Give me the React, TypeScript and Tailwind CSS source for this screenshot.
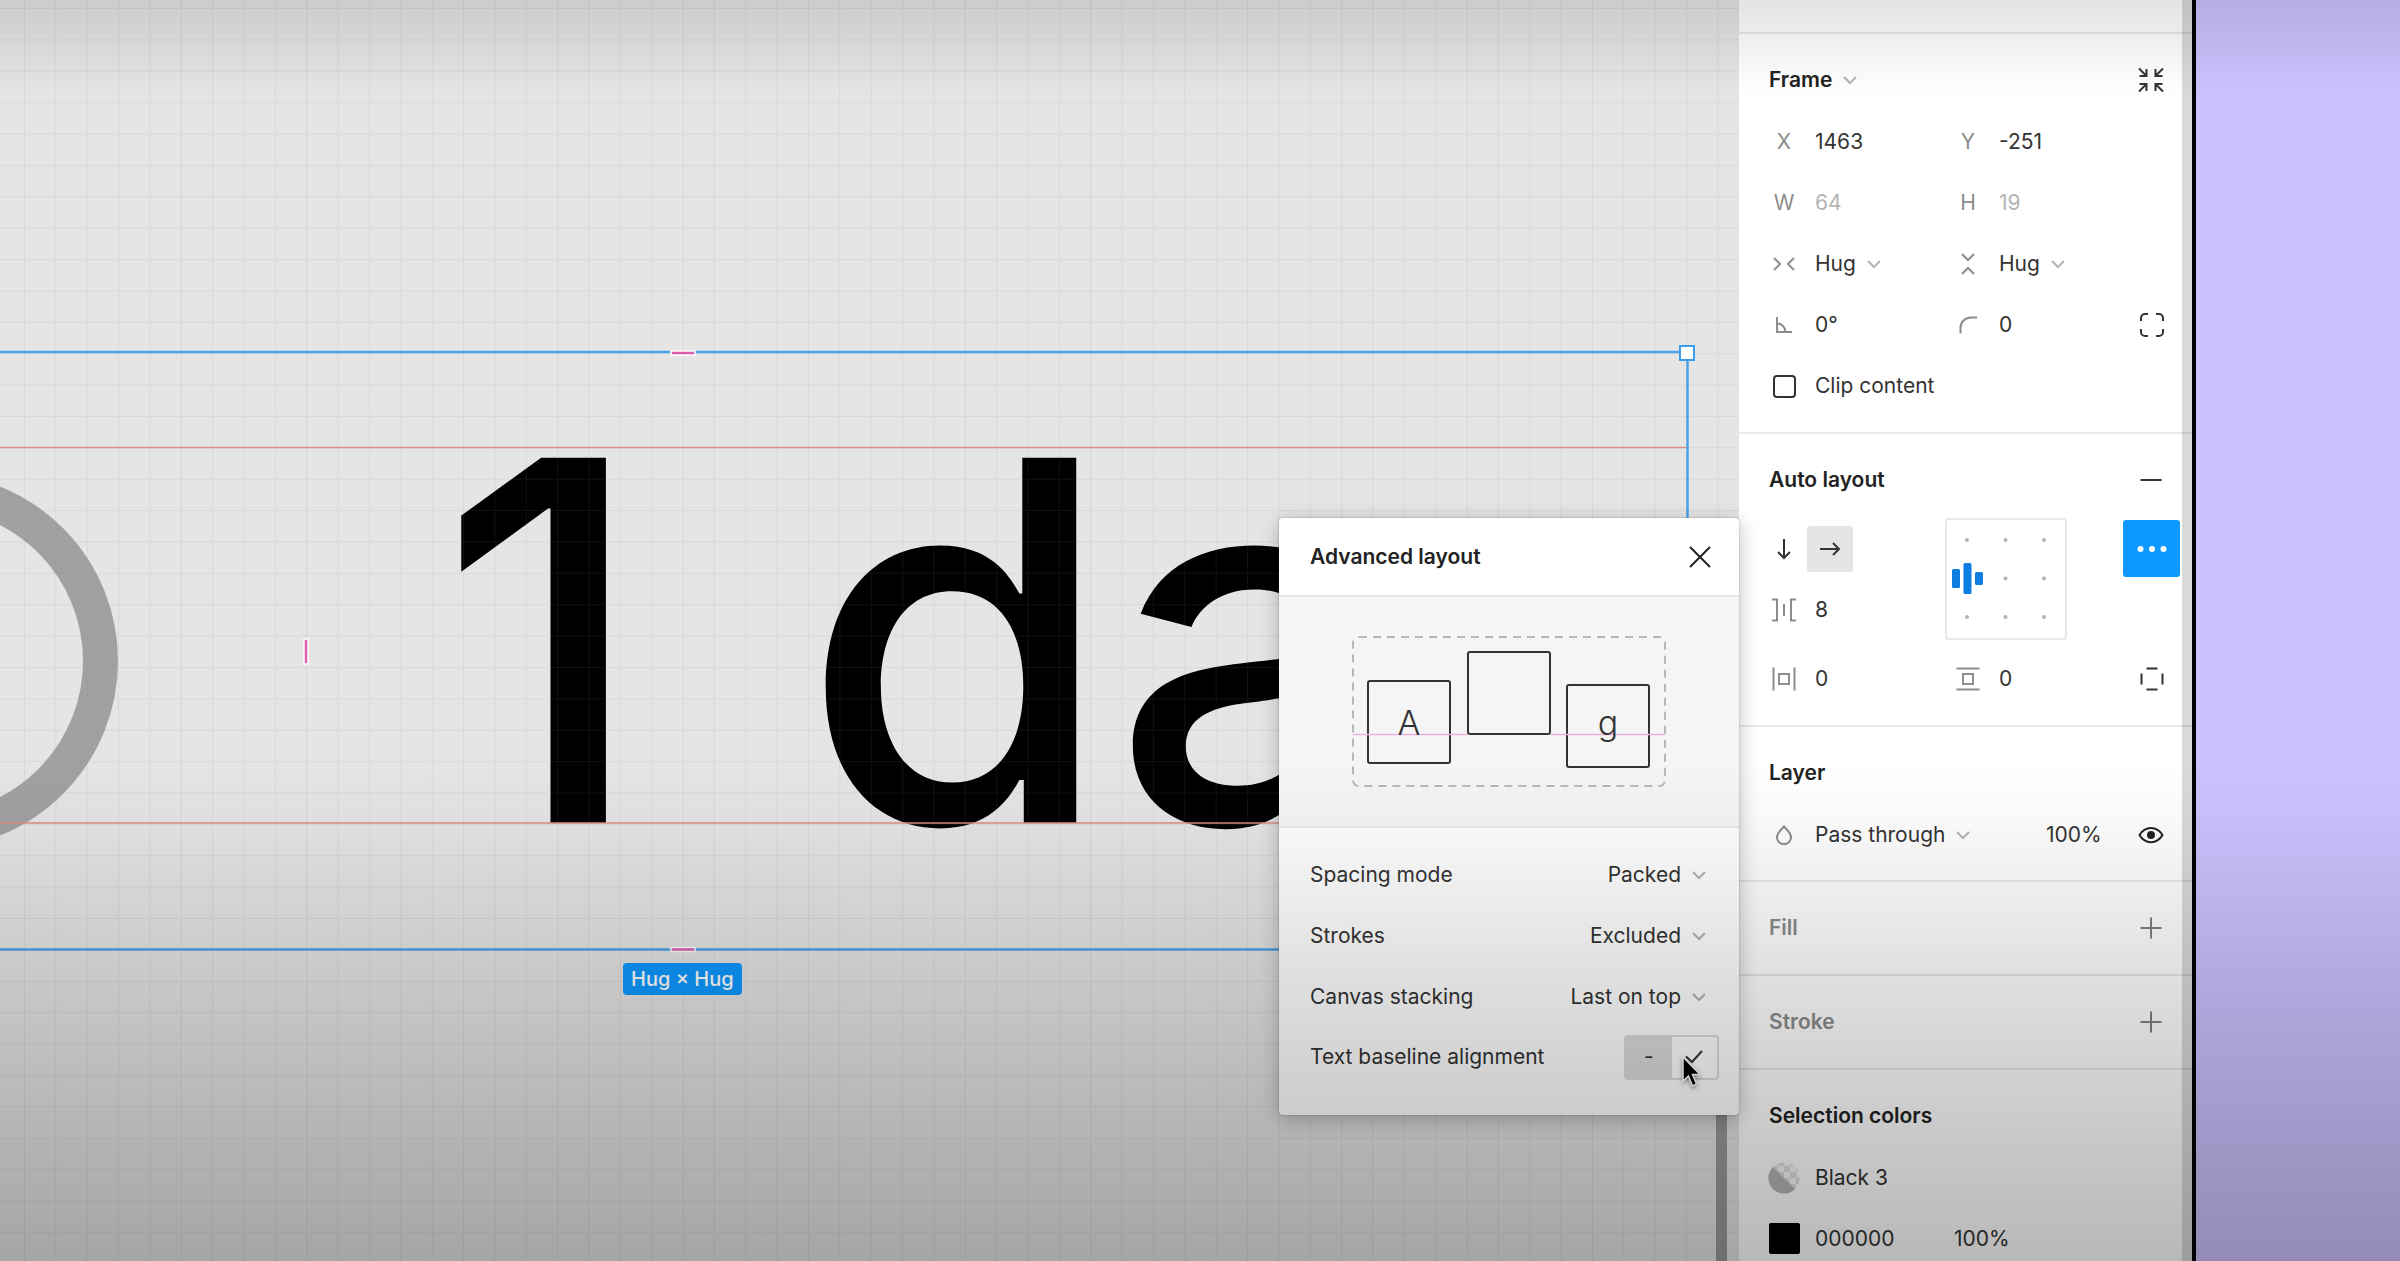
import React from 'react';

interface IconProps {
  children: React.ReactNode;
  className?: string;
}

// Every panel icon sits centred in the same 46px slot
const Icon: React.FC<IconProps> = ({ children, className = 'text-[#8c8c8c]' }) => (
  <svg
    width={46}
    height={46}
    viewBox="-23 -23 46 46"
    fill="none"
    stroke="currentColor"
    strokeWidth={2}
    className={`shrink-0 ${className}`}
    aria-hidden="true"
  >
    {children}
  </svg>
);

const Chevron = () => (
  <svg
    width={14}
    height={10}
    viewBox="-7 -5 14 10"
    fill="none"
    stroke="currentColor"
    strokeWidth={2}
    className="pointer-events-none shrink-0 text-[#b3b3b3]"
    aria-hidden="true"
  >
    <path d="M-6 -3 L0 3 L6 -3" />
  </svg>
);

interface DropdownProps {
  label?: string;
  id?: string;
  options: string[];
}

const Dropdown: React.FC<DropdownProps> = ({ label, id, options }) => (
  <div className="flex items-center gap-[11px]">
    <select id={id} aria-label={label} className="appearance-none bg-transparent outline-none field-sizing-content">
      {options.map((option) => (
        <option key={option}>{option}</option>
      ))}
    </select>
    <Chevron />
  </div>
);

interface FieldProps {
  label: string;
  value: string;
  icon: React.ReactNode;
  muted?: boolean;
}

const Field: React.FC<FieldProps> = ({ label, value, icon, muted }) => (
  <label className="flex h-[61px] w-[184px] shrink-0 items-center gap-2">
    <span className="flex w-[46px] shrink-0 justify-center text-[#8c8c8c]">{icon}</span>
    <input
      type="text"
      aria-label={label}
      defaultValue={value}
      className={`w-24 bg-transparent outline-none ${muted ? 'text-[#b3b3b3]' : ''}`}
    />
  </label>
);

interface SectionProps {
  title: React.ReactNode;
  action?: React.ReactNode;
  children?: React.ReactNode;
  muted?: boolean;
  last?: boolean;
}

const Section: React.FC<SectionProps> = ({ title, action, children, muted, last }) => (
  <section className={`py-[15px] pl-[22px] pr-[18px] ${last ? '' : 'border-b-2 border-[#e8e8e8]'}`}>
    <div className="flex h-[62px] items-center justify-between pl-2">
      <h2 className={`flex items-center gap-[11px] font-semibold ${muted ? 'text-[#8c8c8c]' : 'text-[#222]'}`}>
        {title}
      </h2>
      {action}
    </div>
    {children}
  </section>
);

const AddButton: React.FC<{ label: string }> = ({ label }) => (
  <button type="button" aria-label={label}>
    <Icon className="text-[#808080]">
      <path d="M-10.5 0 H10.5 M0 -10.5 V10.5" />
    </Icon>
  </button>
);

const AlignmentGrid = () => (
  <svg width={122} height={122} viewBox="0 0 118 118" className="rounded-[3px] border-2 border-[#e8e8e8]">
    <g fill="#b3b3b3">
      {[20, 58.5, 97].map((y) =>
        [20, 58.5, 97].map((x) => (x === 20 && y === 58.5 ? null : <circle key={`${x}-${y}`} cx={x} cy={y} r={2} />))
      )}
    </g>
    <g fill="#0d7de2">
      <rect x={5} y={49} width={8} height={19} rx={1.5} />
      <rect x={16.5} y={43} width={8} height={31} rx={1.5} />
      <rect x={28} y={52} width={8} height={13} rx={1.5} />
    </g>
  </svg>
);

const DesignPanel = () => (
  <aside className="relative w-[457px] shrink-0 overflow-hidden border-r-4 border-black bg-white">
    <div className="h-[34px] border-b-2 border-[#e8e8e8]" />

    <Section
      title={
        <>
          Frame <Chevron />
        </>
      }
      action={
        <button type="button" aria-label="Resize to fit">
          <Icon className="text-[#333]">
            <path d="M-12 -11.5 L-4.5 -4 M-4.5 -11 V-4 H-11.5 M12 -11.5 L4.5 -4 M4.5 -11 V-4 H11.5 M-12 11.5 L-4.5 4 M-4.5 11 V4 H-11.5 M12 11.5 L4.5 4 M4.5 11 V4 H11.5" />
          </Icon>
        </button>
      }
    >
      <div className="flex">
        <Field label="X" value="1463" icon="X" />
        <Field label="Y" value="-251" icon="Y" />
      </div>
      <div className="flex">
        <Field label="Width" value="64" icon="W" muted />
        <Field label="Height" value="19" icon="H" muted />
      </div>
      <div className="flex">
        <div className="flex h-[61px] w-[184px] items-center gap-2">
          <Icon>
            <path d="M-10 -6 L-4 0 L-10 6 M10 -6 L4 0 L10 6" />
          </Icon>
          <Dropdown label="Horizontal resizing" options={['Hug', 'Fixed']} />
        </div>
        <div className="flex h-[61px] w-[184px] items-center gap-2">
          <Icon>
            <path d="M-6 -10 L0 -4 L6 -10 M-6 10 L0 4 L6 10" />
          </Icon>
          <Dropdown label="Vertical resizing" options={['Hug', 'Fixed']} />
        </div>
      </div>
      <div className="flex items-center">
        <Field
          label="Rotation"
          value="0°"
          icon={
            <Icon>
              <path d="M-7 -8 V7 H8 M-7 -1.5 A8.5 8.5 0 0 1 1.5 7" />
            </Icon>
          }
        />
        <Field
          label="Corner radius"
          value="0"
          icon={
            <Icon>
              <path d="M-7.5 8.5 V3 A10.5 10.5 0 0 1 3 -7.5 H9" />
            </Icon>
          }
        />
        <button type="button" aria-label="Independent corners">
          <Icon className="text-[#333]">
            <path d="M-11 -4 V-7 A4 4 0 0 1 -7 -11 H-4 M4 -11 H7 A4 4 0 0 1 11 -7 V-4 M11 4 V7 A4 4 0 0 1 7 11 H4 M-4 11 H-7 A4 4 0 0 1 -11 7 V4" />
          </Icon>
        </button>
      </div>
      <label className="flex h-[62px] items-center gap-2">
        <span className="flex w-[46px] justify-center">
          <input type="checkbox" className="size-[23px] appearance-none rounded-[4px] border-2 border-[#333]" />
        </span>
        Clip content
      </label>
    </Section>

    <Section
      title="Auto layout"
      action={
        <button type="button" aria-label="Remove auto layout">
          <Icon className="text-[#333]">
            <path d="M-10.5 0 H10.5" />
          </Icon>
        </button>
      }
    >
      <div className="mt-[7px] flex">
        <div className="w-[184px]">
          <div className="flex h-[61px] items-center">
            <button type="button" aria-label="Vertical layout">
              <Icon className="text-[#333]">
                <path d="M0 -10 V9 M-6 3 L0 9 L6 3" />
              </Icon>
            </button>
            <button type="button" aria-label="Horizontal layout" className="rounded-[3px] bg-[#e5e5e5]">
              <Icon className="text-[#333]">
                <path d="M-10 0 H9 M3 -6 L9 0 L3 6" />
              </Icon>
            </button>
          </div>
          <Field
            label="Gap between items"
            value="8"
            icon={
              <Icon>
                <path d="M-12 -10.5 H-7 V10.5 H-12 M0 -6 V6 M12 -10.5 H7 V10.5 H12" />
              </Icon>
            }
          />
        </div>
        <AlignmentGrid />
        <button
          type="button"
          aria-label="Advanced layout options"
          className="mt-[2px] ml-auto -mr-[6px] flex size-[57px] items-center justify-center rounded-[3px] bg-[#0d99ff]"
        >
          <Icon className="text-white">
            <g fill="currentColor" stroke="none">
              <circle cx={-11.5} cy={0} r={3} />
              <circle cx={0} cy={0} r={3} />
              <circle cx={11.5} cy={0} r={3} />
            </g>
          </Icon>
        </button>
      </div>
      <div className="mt-2 flex items-center pb-px">
        <Field
          label="Horizontal padding"
          value="0"
          icon={
            <Icon>
              <path d="M-10.5 -11.5 V11.5 M10.5 -11.5 V11.5 M-5 -5 H5 V5 H-5 Z" />
            </Icon>
          }
        />
        <Field
          label="Vertical padding"
          value="0"
          icon={
            <Icon>
              <path d="M-11.5 -10.5 H11.5 M-11.5 10.5 H11.5 M-5 -5 H5 V5 H-5 Z" />
            </Icon>
          }
        />
        <button type="button" aria-label="Individual padding">
          <Icon className="text-[#333]">
            <path d="M-10.5 -5.5 V5.5 M10.5 -5.5 V5.5 M-5.5 -10.5 H5.5 M-5.5 10.5 H5.5" />
          </Icon>
        </button>
      </div>
    </Section>

    <Section title="Layer">
      <div className="flex h-[61px] items-center">
        <div className="flex items-center gap-2">
          <Icon>
            <path d="M0 -8.5 C-3 -5 -7 -2 -7 2.2 A7 7 0 0 0 7 2.2 C7 -2 3 -5 0 -8.5 Z" />
          </Icon>
          <Dropdown label="Blend mode" options={['Pass through', 'Normal']} />
        </div>
        <input
          type="text"
          aria-label="Layer opacity"
          defaultValue="100%"
          className="mr-7 ml-auto w-[54px] bg-transparent outline-none"
        />
        <button type="button" aria-label="Hide layer">
          <Icon className="text-[#222]">
            <path d="M-11.5 0 C-6 -9.5 6 -9.5 11.5 0 C6 9.5 -6 9.5 -11.5 0 Z" />
            <circle cx={0} cy={0} r={4} fill="currentColor" stroke="none" />
          </Icon>
        </button>
      </div>
    </Section>

    <Section title="Fill" muted action={<AddButton label="Add fill" />} />
    <Section title="Stroke" muted action={<AddButton label="Add stroke" />} />

    <Section title="Selection colors" last>
      <div className="flex h-[61px] items-center gap-2">
        <Icon>
          <defs>
            <pattern id="checker" width={12} height={12} patternUnits="userSpaceOnUse">
              <rect width={12} height={12} fill="#f6f6f6" stroke="none" />
              <path d="M0 0 H6 V6 H0 Z M6 6 H12 V12 H6 Z" fill="#dedede" stroke="none" />
            </pattern>
          </defs>
          <circle r={15.5} fill="url(#checker)" stroke="none" />
          <path d="M-11 -11 A15.5 15.5 0 0 0 11 11 Z" fill="#b5b5b5" stroke="none" />
        </Icon>
        Black 3
      </div>
      <div className="flex h-[61px] items-center gap-2">
        <span className="flex w-[46px] justify-center">
          <button type="button" aria-label="Edit color" className="size-[31px] rounded-[2px] bg-black" />
        </span>
        <input type="text" aria-label="Hex" defaultValue="000000" className="w-[131px] bg-transparent outline-none" />
        <input type="text" aria-label="Opacity" defaultValue="100%" className="w-20 bg-transparent outline-none" />
      </div>
    </Section>

    {/* scroll gutter */}
    <div className="absolute inset-y-0 right-0 w-[10px] bg-black/15" />
  </aside>
);

const BaselinePreview = () => (
  <svg width={314} height={151} viewBox="0 0 314 151" fill="none" className="text-[#333]">
    <rect x={1} y={1} width={312} height={149} rx={6} stroke="#b8b8b8" strokeWidth={2} strokeDasharray="8 6" />
    <g stroke="currentColor" strokeWidth={2}>
      <rect x={16} y={45} width={82} height={82} rx={2} />
      <rect x={116} y={16} width={82} height={82} rx={2} />
      <rect x={215} y={49} width={82} height={82} rx={2} />
    </g>
    <path d="M1 98.5 H116 M198 98.5 H313" stroke="#e9b3e0" strokeWidth={1.5} />
    <g fill="currentColor" textAnchor="middle" fontSize={34} fontWeight={300}>
      <text x={57} y={99}>A</text>
      <text x={256} y={99}>g</text>
    </g>
  </svg>
);

const layoutOptions = [
  { id: 'spacing-mode', label: 'Spacing mode', options: ['Packed', 'Space between'] },
  { id: 'strokes', label: 'Strokes', options: ['Excluded', 'Included'] },
  { id: 'canvas-stacking', label: 'Canvas stacking', options: ['Last on top', 'First on top'] },
];

const AdvancedLayout = () => (
  <div
    role="dialog"
    aria-labelledby="advanced-layout"
    className="absolute top-[518px] right-0 w-[460px] rounded-[4px] bg-white shadow-[0_4px_20px_rgba(0,0,0,0.25),0_0_2px_rgba(0,0,0,0.3)]"
  >
    <div className="flex h-[79px] items-center justify-between border-b-2 border-[#e8e8e8] pr-4 pl-[31px]">
      <h2 id="advanced-layout" className="font-semibold text-[#222]">
        Advanced layout
      </h2>
      <button type="button" aria-label="Close">
        <Icon className="text-[#222]">
          <path d="M-10 -10 L10 10 M10 -10 L-10 10" />
        </Icon>
      </button>
    </div>
    <div className="flex h-[231px] items-center justify-center border-b-2 border-[#e8e8e8] bg-[#f5f5f5]">
      <BaselinePreview />
    </div>
    <div className="pt-4 pb-7">
      {layoutOptions.map(({ id, label, options }) => (
        <div key={id} className="flex h-[61px] items-center justify-between pr-[33px] pl-[31px]">
          <label htmlFor={id}>{label}</label>
          <Dropdown id={id} options={options} />
        </div>
      ))}
      <div className="flex h-[60px] items-center justify-between pr-5 pl-[31px]">
        Text baseline alignment
        <div className="flex h-[45px] w-[95px] overflow-hidden rounded-[4px] border-2 border-[#dcdcdc]">
          <button type="button" aria-label="Off" className="flex flex-1 items-center justify-center bg-[#dcdcdc]">
            -
          </button>
          <button type="button" aria-label="On" className="flex flex-1 items-center justify-center">
            <svg width={18} height={14} viewBox="0 0 18 14" fill="none" stroke="#333" strokeWidth={2} aria-hidden="true">
              <path d="M1 6.5 L7 12 L17 1" />
            </svg>
          </button>
        </div>
      </div>
    </div>
    <svg
      width={26}
      height={36}
      viewBox="0 0 26 36"
      className="absolute top-[537px] left-[402px] drop-shadow-[0_2px_2px_rgba(0,0,0,0.4)]"
      aria-hidden="true"
    >
      <path
        d="M2 2 V26 L7.5 21 L11.5 31 L15.5 29 L11.5 19.5 H19 Z"
        fill="#000"
        stroke="#fff"
        strokeWidth={1.5}
      />
    </svg>
  </div>
);

const Canvas = () => (
  <main className="relative flex-1 bg-[#e5e5e5]">
    <div className="absolute inset-0 overflow-hidden">
      <div className="absolute top-[473px] -left-[258px] size-[376px] rounded-full border-[35px] border-[#a1a1a1]" />
      <p className="absolute top-[390px] left-[438px] text-[502px] leading-none font-medium whitespace-nowrap text-black">
        1 <span className="ml-[22px]">da</span>
      </p>

      {/* pixel grid and selection outlines */}
      <svg className="absolute inset-0 size-full" aria-hidden="true">
        <defs>
          <pattern id="pixels" x={24} y={8} width={31.36} height={31.38} patternUnits="userSpaceOnUse">
            <path d="M0 0 H31.36 M0 0 V31.38" stroke="rgba(128,128,128,0.13)" strokeWidth={2} fill="none" />
          </pattern>
        </defs>
        <rect width="100%" height="100%" fill="url(#pixels)" />
        <g stroke="#dc8f80" strokeWidth={1.5}>
          <path d="M0 447.5 H1687 M0 823 H1687" />
        </g>
        <path d="M0 352 H1687.5 V949.5 H0" stroke="#4ea3e8" strokeWidth={2.5} fill="none" />
        <rect x={1680} y={346} width={14} height={14} fill="#fff" stroke="#3f9de8" strokeWidth={2} />
        <g fill="#d95fae" stroke="#fff" strokeWidth={1.5}>
          <rect x={671} y={351} width={24} height={4} />
          <rect x={671} y={947.5} width={24} height={4} />
          <rect x={304} y={639} width={4} height={25} />
        </g>
      </svg>

      <div className="absolute top-[963px] left-[623px] flex h-8 items-center rounded-[4px] bg-[#0d99ff] px-2 text-[20px] font-medium whitespace-nowrap text-white">
        Hug × Hug
      </div>
      <div className="absolute top-[1000px] right-3 bottom-0 w-[11px] bg-[#999]" />
    </div>
    <AdvancedLayout />
  </main>
);

export default function App() {
  return (
    <div className="relative flex h-screen min-h-[720px] overflow-hidden bg-[#cdc1ff] font-['Inter',sans-serif] text-[21px] leading-7 text-[#333]">
      <div className="relative z-10 flex flex-1">
        <Canvas />
      </div>
      <DesignPanel />
      <div className="w-[204px] shrink-0" />

      {/* player shade along the top and bottom edges */}
      <div className="pointer-events-none absolute inset-x-0 top-0 z-20 h-[96px] bg-linear-to-b from-black/11 to-transparent" />
      <div className="pointer-events-none absolute inset-x-0 bottom-0 z-20 h-[500px] bg-[linear-gradient(to_bottom,transparent,rgba(0,0,0,0.03)_14%,rgba(0,0,0,0.12)_42%,rgba(0,0,0,0.21)_74%,rgba(0,0,0,0.28))]" />
    </div>
  );
}
